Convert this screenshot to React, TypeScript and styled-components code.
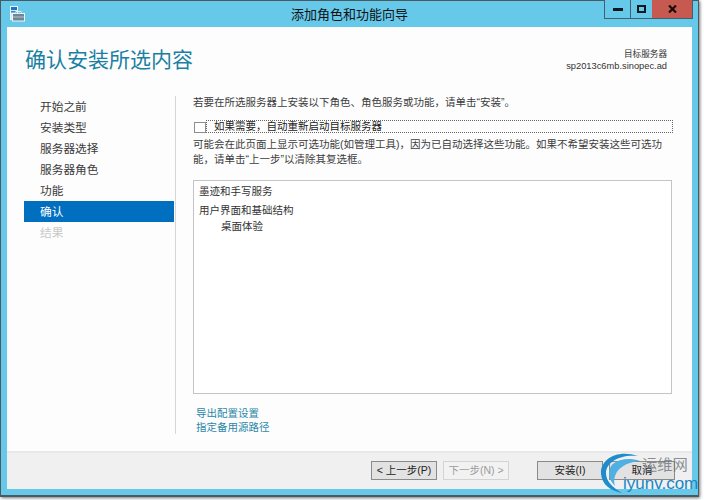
import React from 'react';
import styled, { createGlobalStyle } from 'styled-components';

const FONT = `"Liberation Sans", "Noto Sans CJK SC", sans-serif`;

const Global = createGlobalStyle`
  html, body { margin: 0; padding: 0; background: #fff; }
  body { width: 704px; height: 500px; overflow: hidden; font-family: ${FONT}; }
`;

const Frame = styled.div`
  position: relative;
  width: 704px;
  height: 500px;
  overflow: hidden;
  background: #ffffff;
`;

const Win = styled.div`
  width: 699px;
  height: 497px;
  box-sizing: border-box;
  background: #66c9ea;
  border: 1px solid #4a5a63;
  border-width: 1px 1px 2px 1px;
  box-shadow: 1px 1px 3px rgba(0, 0, 0, 0.55);
  padding: 0 6px 6px 6px;
  display: flex;
  flex-direction: column;
`;

const TitleBar = styled.div`
  height: 26px;
  flex: none;
  display: grid;
  grid-template-columns: 1fr auto 1fr;
  align-items: center;
`;

const AppIcon = styled.svg`
  width: 16px;
  height: 16px;
  margin: 0 0 0 2px;
`;

const TitleText = styled.div`
  text-align: center;
  font-size: 13px;
  line-height: 18px;
  color: #111;
  margin-top: 1px;
`;

const WinButtons = styled.div`
  display: flex;
  justify-self: end;
  align-self: start;
  margin-top: -1px;
  margin-right: -1px;
  height: 19px;
  border: 1px solid #44606c;
  border-top: none;
  box-sizing: border-box;
`;

const WinButton = styled.div<{ $w: number; $close?: boolean }>`
  width: ${p => p.$w}px;
  background: ${p => (p.$close ? '#c75a50' : '#66c9ea')};
  border-left: ${p => (p.$close ? 'none' : '1px solid #44606c')};
  box-sizing: border-box;
  display: flex;
  align-items: center;
  justify-content: center;
  &:first-child { border-left: none; }
`;

const Glyph = styled.svg`
  display: block;
`;

const Body = styled.div`
  flex: 1;
  background: #fdfdfd;
  display: flex;
  flex-direction: column;
  min-height: 0;
`;

const Header = styled.div`
  height: 69px;
  flex: none;
  display: flex;
  justify-content: space-between;
  padding: 0 6px 0 18px;
  box-sizing: border-box;
`;

const Heading = styled.h1`
  margin: 17px 0 0;
  font-size: 21px;
  line-height: 31px;
  font-weight: 400;
  color: #1a80a3;
`;

const Target = styled.div`
  margin-top: 21px;
  margin-right: 19px;
  text-align: right;
  font-size: 8.6px;
  line-height: 12px;
  color: #333;
`;

const TargetHost = styled.div`
  font-size: 9.3px;
`;

const Main = styled.div`
  flex: 1;
  display: flex;
  min-height: 0;
`;

const Nav = styled.nav`
  width: 150px;
  margin-left: 17px;
  flex: none;
`;

const NavItem = styled.div<{ $active?: boolean; $disabled?: boolean }>`
  height: 21px;
  line-height: 21px;
  padding-left: 16px;
  font-size: 11.7px;
  color: ${p => (p.$active ? '#fff' : p.$disabled ? '#c8c8c8' : '#3a3a3a')};
  background: ${p => (p.$active ? '#006fc0' : 'transparent')};
`;

const Content = styled.div`
  width: 498px;
  height: 338px;
  margin-left: 1px;
  border-left: 1px solid #d6d6d6;
  padding-left: 17px;
  box-sizing: border-box;
  display: flex;
  flex-direction: column;
`;

const Para = styled.p`
  margin: 0;
  font-size: 10.5px;
  line-height: 15px;
  color: #3c3c3c;
`;

const Intro = styled(Para)`
  line-height: 13px;
`;

const CheckRow = styled.div`
  display: flex;
  align-items: center;
  height: 14px;
  margin-top: 11px;
`;

const Box = styled.div`
  width: 12px;
  height: 11px;
  flex: none;
  box-sizing: border-box;
  margin-left: 1px;
  margin-top: 1px;
  border: 1px solid #8f8f8f;
  background: #fff;
`;

const CheckLabel = styled.div`
  width: 468px;
  height: 13px;
  box-sizing: border-box;
  border: 1px dotted #666;
  padding-left: 7px;
  font-size: 10.5px;
  line-height: 11px;
  color: #222;
`;

const Note = styled(Para)`
  margin-top: 4px;
  width: 476px;
`;

const ListBox = styled.div`
  width: 479px;
  height: 214px;
  margin-top: 13px;
  box-sizing: border-box;
  border: 1px solid #c4c4c4;
  background: #fff;
  padding: 3px 5px;
  flex: none;
`;

const ListItem = styled.div<{ $indent?: boolean; $gap?: number }>`
  font-size: 10.5px;
  line-height: 15px;
  color: #333;
  margin-top: ${p => p.$gap ?? 0}px;
  padding-left: ${p => (p.$indent ? 22 : 0)}px;
`;

const Links = styled.div`
  margin-top: 12px;
  margin-left: 3px;
  display: flex;
  flex-direction: column;
`;

const LinkText = styled.a`
  font-size: 10.5px;
  line-height: 14px;
  color: #2a87a8;
`;

const Footer = styled.div`
  height: 38px;
  flex: none;
  background: #f0f0f0;
  border-top: 2px solid #e8e8e8;
  box-sizing: border-box;
  display: flex;
  align-items: flex-start;
  padding: 8px 0 0 364px;
`;

const Btn = styled.div<{ $disabled?: boolean; $w: number; $ml: number }>`
  width: ${p => p.$w}px;
  height: 19px;
  margin-left: ${p => p.$ml}px;
  box-sizing: border-box;
  border: 1px solid ${p => (p.$disabled ? '#d4d4d4' : '#8a8a8a')};
  background: ${p => (p.$disabled ? '#f2f2f2' : '#e2e2e2')};
  color: ${p => (p.$disabled ? '#9c9c9c' : '#222')};
  font-size: 10.5px;
  line-height: 17px;
  text-align: center;
  white-space: nowrap;
`;

const Mark = styled.div`
  position: absolute;
  left: 600px;
  top: 451px;
  width: 104px;
  height: 49px;
  pointer-events: none;
`;

const MarkSwirl = styled.svg`
  position: absolute;
  left: 0;
  top: 0;
`;

const MarkCn = styled.span`
  position: absolute;
  left: 42px;
  top: 4px;
  font-size: 15.3px;
  line-height: 20px;
  color: rgba(110, 115, 120, 0.8);
`;

const MarkEn = styled.span`
  position: absolute;
  left: 23px;
  top: 25px;
  font-size: 17px;
  line-height: 16px;
  color: #1a86c4;
`;

const nav = ['开始之前', '安装类型', '服务器选择', '服务器角色', '功能'];

export default function App() {
  return (
    <Frame>
      <Global />
      <Win>
        <TitleBar>
          <AppIcon viewBox="0 0 16 16">
            <rect x="1.5" y="0.5" width="7" height="13" fill="#cfeaf6" stroke="#e8f6fb" />
            <rect x="2" y="1" width="6" height="3" fill="#1f74bd" />
            <rect x="2" y="5" width="6" height="1.5" fill="#2f86c8" />
            <rect x="3.5" y="7.5" width="12" height="7.5" fill="#6f8794" stroke="#eef6f9" strokeWidth="1" />
            <rect x="7" y="5.5" width="5" height="2" fill="none" stroke="#e4eef2" strokeWidth="1" />
            <rect x="4" y="10.5" width="11" height="1" fill="#b6c4cb" />
          </AppIcon>
          <TitleText>添加角色和功能向导</TitleText>
          <WinButtons>
            <WinButton $w={25}>
              <Glyph width="10" height="3"><rect width="10" height="3" fill="#0c1820" /></Glyph>
            </WinButton>
            <WinButton $w={22}>
              <Glyph width="9" height="8"><rect x="1" y="1" width="7" height="6" fill="none" stroke="#0c1820" strokeWidth="2" /></Glyph>
            </WinButton>
            <WinButton $w={40} $close>
              <Glyph width="9" height="8"><path d="M1 0.5 L8 7.5 M8 0.5 L1 7.5" stroke="#1a0c0a" strokeWidth="2.2" /></Glyph>
            </WinButton>
          </WinButtons>
        </TitleBar>
        <Body>
          <Header>
            <Heading>确认安装所选内容</Heading>
            <Target>
              <div>目标服务器</div>
              <TargetHost>sp2013c6mb.sinopec.ad</TargetHost>
            </Target>
          </Header>
          <Main>
            <Nav>
              {nav.map(n => <NavItem key={n}>{n}</NavItem>)}
              <NavItem $active>确认</NavItem>
              <NavItem $disabled>结果</NavItem>
            </Nav>
            <Content>
              <Intro>若要在所选服务器上安装以下角色、角色服务或功能，请单击“安装”。</Intro>
              <CheckRow>
                <Box />
                <CheckLabel>如果需要，自动重新启动目标服务器</CheckLabel>
              </CheckRow>
              <Note>可能会在此页面上显示可选功能(如管理工具)，因为已自动选择这些功能。如果不希望安装这些可选功能，请单击“上一步”以清除其复选框。</Note>
              <ListBox>
                <ListItem>墨迹和手写服务</ListItem>
                <ListItem $gap={4}>用户界面和基础结构</ListItem>
                <ListItem $indent $gap={1}>桌面体验</ListItem>
              </ListBox>
              <Links>
                <LinkText>导出配置设置</LinkText>
                <LinkText>指定备用源路径</LinkText>
              </Links>
            </Content>
          </Main>
          <Footer>
            <Btn $w={66} $ml={0}>&lt; 上一步(P)</Btn>
            <Btn $w={66} $ml={6} $disabled>下一步(N) &gt;</Btn>
            <Btn $w={66} $ml={28}>安装(I)</Btn>
            <Btn $w={66} $ml={6}>取消</Btn>
          </Footer>
        </Body>
      </Win>
      <Mark>
        <MarkSwirl width="50" height="49" viewBox="0 0 50 49">
          <path d="M38 5 C16 -2 0 9 1 23 C2 33 10 40 22 42 C12 36 6 30 6 22 C6 12 19 3 38 5 Z" fill="#1f8ccc" />
          <path d="M40 10 C25 5 9 10 9 22 C9 27 11 31 15 35 C12 25 18 12 40 10 Z" fill="#4fb0e2" />
        </MarkSwirl>
        <MarkCn>运维网</MarkCn>
        <MarkEn>iyunv.com</MarkEn>
      </Mark>
    </Frame>
  );
}
